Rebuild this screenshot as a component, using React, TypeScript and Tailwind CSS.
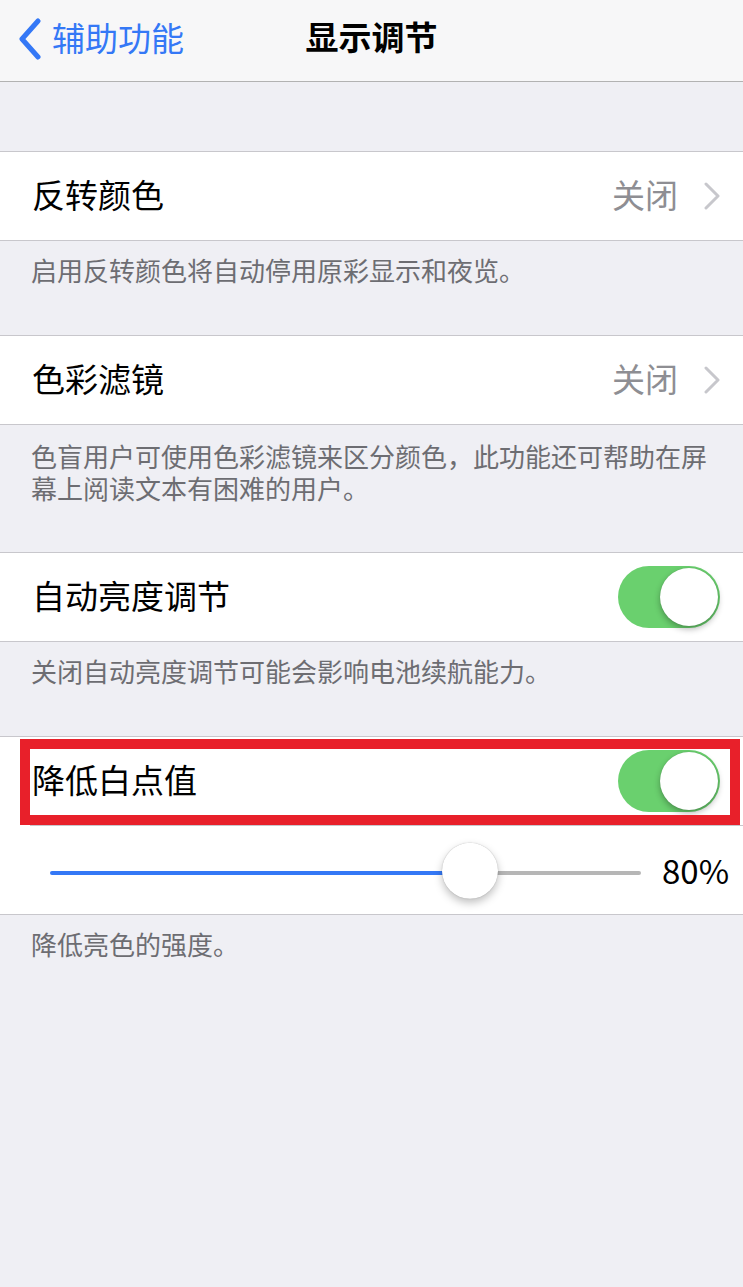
import { ReactNode } from "react";

const font = { fontFamily: '"Noto Sans CJK SC", "Noto Sans", sans-serif' };

function Toggle() {
  return (
    <div className="w-[102px] h-[62px] rounded-full bg-[#6ad06e] flex items-center justify-end pr-[2px]">
      <div className="w-[58px] h-[58px] rounded-full bg-white shadow-[0_3px_6px_rgba(0,0,0,0.3),0_0_1px_rgba(0,0,0,0.2)]" />
    </div>
  );
}

function Chevron() {
  return (
    <svg width="16" height="28" viewBox="0 0 16 28" fill="none">
      <polyline points="2,2 14,14 2,26" stroke="#c7c7cc" strokeWidth="3" strokeLinecap="round" strokeLinejoin="round" />
    </svg>
  );
}

function Row({ label, children }: { label: string; children?: ReactNode }) {
  return (
    <div className="h-[88px] flex items-center justify-between pl-[32px] pr-[23px] bg-white">
      <span className="text-[33px] text-black leading-none -mt-[4px]">{label}</span>
      {children}
    </div>
  );
}

function Group({ children }: { children: ReactNode }) {
  return <div className="bg-white border-y border-[#c8c7cc]">{children}</div>;
}

function Note({ children, pt = "pt-[13px]", pb = "pb-[49px]" }: { children: ReactNode; pt?: string; pb?: string }) {
  return (
    <p className={`px-[31px] ${pt} ${pb} text-[26px] leading-[32px] text-[#6d6d72]`}>{children}</p>
  );
}

function OffValue() {
  return (
    <div className="flex items-center gap-[26px]">
      <span className="text-[33px] leading-none text-[#8e8e93] -mt-[4px]">关闭</span>
      <Chevron />
    </div>
  );
}

export default function App() {
  return (
    <div style={font} className="min-h-[1287px] w-[743px] bg-[#efeff4]">
      {/* Navigation bar */}
      <div className="h-[82px] bg-[#f7f7f8] border-b border-[#b2b2b2] grid grid-cols-[1fr_auto_1fr] items-center">
        <div className="flex items-center pl-[18px] gap-[10px] text-[#3478f6] -mt-[3px]">
          <svg width="24" height="42" viewBox="0 0 24 42" fill="none">
            <polyline points="20,3 4,21 20,39" stroke="#3478f6" strokeWidth="5" strokeLinecap="round" strokeLinejoin="round" />
          </svg>
          <span className="text-[33px] leading-none -mt-[4px]">辅助功能</span>
        </div>
        <h1 className="text-[33px] leading-none font-semibold text-black -mt-[8px]">显示调节</h1>
        <div />
      </div>

      <div className="h-[69px]" />

      <Group>
        <Row label="反转颜色">
          <OffValue />
        </Row>
      </Group>
      <Note>启用反转颜色将自动停用原彩显示和夜览。</Note>

      <Group>
        <Row label="色彩滤镜">
          <OffValue />
        </Row>
      </Group>
      <Note pt="pt-[15px]" pb="pb-[48px]">
        色盲用户可使用色彩滤镜来区分颜色，此功能还可帮助在屏幕上阅读文本有困难的用户。
      </Note>

      <Group>
        <Row label="自动亮度调节">
          <Toggle />
        </Row>
      </Group>
      <Note>关闭自动亮度调节可能会影响电池续航能力。</Note>

      <Group>
        <div className="relative">
          <Row label="降低白点值">
            <Toggle />
          </Row>
          {/* highlight frame */}
          <div className="absolute left-[20px] right-[3px] top-[2px] bottom-[0px] border-[10px] border-[#e8202a] pointer-events-none" />
        </div>
        <div className="ml-[30px] border-t border-[#c8c7cc]" />
        <div className="h-[88px] flex items-center pl-[50px] pr-[12px] pt-[5px]">
          <div className="relative w-[591px] h-[4px] flex">
            <div className="w-[394px] h-full rounded-l-full bg-[#3478f6]" />
            <div className="flex-1 h-full rounded-r-full bg-[#b6b6b6]" />
            <div className="absolute left-[392px] top-1/2 -translate-y-[54%] w-[56px] h-[56px] rounded-full bg-white shadow-[0_4px_8px_rgba(0,0,0,0.25),0_0_1px_rgba(0,0,0,0.3)]" />
          </div>
          <span className="ml-[21px] text-[33px] leading-none text-black -mt-[4px]">80%</span>
        </div>
      </Group>
      <Note>降低亮色的强度。</Note>
    </div>
  );
}
